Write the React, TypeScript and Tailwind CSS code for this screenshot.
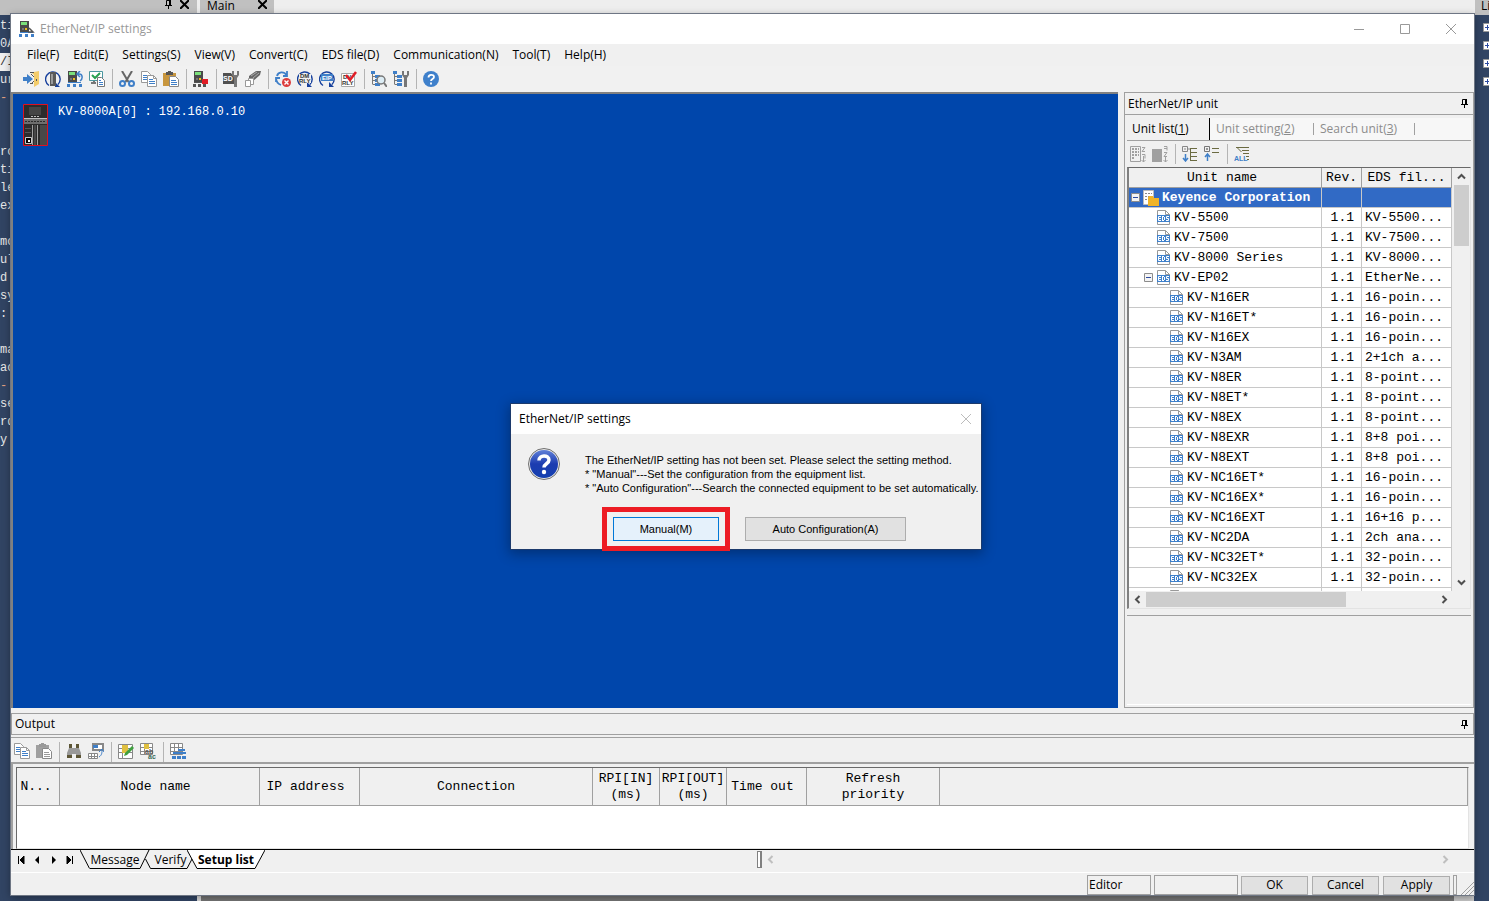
import type { ReactNode } from "react";

const menus = [
  "File(F)",
  "Edit(E)",
  "Settings(S)",
  "View(V)",
  "Convert(C)",
  "EDS file(D)",
  "Communication(N)",
  "Tool(T)",
  "Help(H)",
];

const units = [
  { name: "KV-5500", level: 1, eds: "KV-5500..." },
  { name: "KV-7500", level: 1, eds: "KV-7500..." },
  { name: "KV-8000 Series", level: 1, eds: "KV-8000..." },
  { name: "KV-EP02", level: 1, eds: "EtherNe...", open: true },
  { name: "KV-N16ER", level: 2, eds: "16-poin..." },
  { name: "KV-N16ET*", level: 2, eds: "16-poin..." },
  { name: "KV-N16EX", level: 2, eds: "16-poin..." },
  { name: "KV-N3AM", level: 2, eds: "2+1ch a..." },
  { name: "KV-N8ER", level: 2, eds: "8-point..." },
  { name: "KV-N8ET*", level: 2, eds: "8-point..." },
  { name: "KV-N8EX", level: 2, eds: "8-point..." },
  { name: "KV-N8EXR", level: 2, eds: "8+8 poi..." },
  { name: "KV-N8EXT", level: 2, eds: "8+8 poi..." },
  { name: "KV-NC16ET*", level: 2, eds: "16-poin..." },
  { name: "KV-NC16EX*", level: 2, eds: "16-poin..." },
  { name: "KV-NC16EXT", level: 2, eds: "16+16 p..." },
  { name: "KV-NC2DA", level: 2, eds: "2ch ana..." },
  { name: "KV-NC32ET*", level: 2, eds: "32-poin..." },
  { name: "KV-NC32EX", level: 2, eds: "32-poin..." },
  { name: "", level: 2, eds: "" },
];

const outputColumns = [
  { name: "N...", pad: "pr-1" },
  { name: "Node name", pad: "pr-2" },
  { name: "IP address", pad: "pr-2" },
  { name: "Connection", pad: "" },
  { name: "RPI[IN] (ms)", pad: "" },
  { name: "RPI[OUT] (ms)", pad: "" },
  { name: "Time out", pad: "pr-2" },
  { name: "Refresh priority", pad: "px-5" },
  { name: "", pad: "" },
];

const codeLines = [
  "ti", "0A", "/I", "ur", "-", "", "", "ro", "ti", "le", "ex", "",
  "mo", "ul", "d", "sy", ":", "", "ma", "ac", "-", "se", "rd", "y",
];

function Icon({ children, size = 16 }: { children: ReactNode; size?: number }) {
  return (
    <svg width={size} height={size} viewBox="0 0 16 16" fill="none" className="shrink-0" aria-hidden="true">
      {children}
    </svg>
  );
}

function Tool({ label, children }: { label: string; children: ReactNode }) {
  return (
    <button type="button" aria-label={label} className="flex h-[22px] w-[22px] shrink-0 items-center justify-center">
      <Icon>{children}</Icon>
    </button>
  );
}

function Separator() {
  return <span className="ml-1 mr-[3px] h-5 w-px shrink-0 bg-[#b4b4b4]" />;
}

function Plc() {
  return (
    <>
      <path d="M1 0h9v11H1z" fill="#4a4a4a" />
      <path d="M2 1h6v3H2z" fill="#7be07b" />
      <path d="M6 7h2v2H6z" fill="#f0c020" />
      <path d="M3 7h2v2H3z" fill="#777" />
    </>
  );
}

function Nodes() {
  return (
    <path d="M0 13h3v3H0zM6 13h3v3H6zM12 13h3v3h-3zM1 11h13v1H1z" fill="#3f7fc8" />
  );
}

function Pages() {
  return (
    <>
      <path d="M.5.5h6l3 3v8h-9z" fill="#fff" stroke="#999" />
      <path d="M2 4.5h4M2 6.5h4M2 8.5h4" stroke="#3f7fc8" />
      <path d="M6.5 4.5h6l3 3v8h-9z" fill="#fff" stroke="#999" />
      <path d="M12.5 4.5v3h3" stroke="#999" />
      <path d="M8 8.5h4M8 10.5h6M8 12.5h6" stroke="#3f7fc8" />
    </>
  );
}

function PasteShape({ grey }: { grey?: boolean }) {
  return (
    <>
      <path d="M0 2h13v13H0z" fill={grey ? "#a0a0a0" : "#c8963e"} />
      <path d="M3 1h2V0h3v1h2v3H3z" fill={grey ? "#999" : "#555"} />
      <path d="M6.5 5.5h6l3 3v7h-9z" fill="#fff" stroke="#888" />
      <path d="M8 9.5h5M8 11.5h6M8 13.5h6" stroke={grey ? "#999" : "#3f7fc8"} />
    </>
  );
}

function Wrench() {
  return (
    <path d="M9 0v4l2 3v9h3V7l2-3V0h-2v4h-3V0z" fill="#777" />
  );
}

function Cycle() {
  return (
    <>
      <path d="M4 14.5A7.300 7.300 0 1 1 13 13.500" stroke="#17409c" strokeWidth="1.400" />
      <path d="M10 11v5h5z" fill="#17409c" />
    </>
  );
}

function TreeLines() {
  return (
    <>
      <path d="M1.5 0v13.5M2 5.5h3M2 9.5h3M2 13.500h3" stroke="#777" />
      <path d="M0 0h4v3H0zM4 4h5v3H4zM4 8h5v3H4zM4 12h5v3H4z" fill="#3f7fc8" />
    </>
  );
}

function MainToolbar() {
  return (
    <div className="flex h-[26px] shrink-0 items-center bg-[#f1f1f1] pl-[9px]">
      <Tool label="Exit">
        <path d="M8 1h3l5-1v13l-5 3V4z" fill="#f3cc6b" />
        <path d="M7 1.500h4M7 12.500h3M13.500 8v2" stroke="#555" />
        <path d="M0 6h4V3l6 5-6 5v-3H0z" fill="#3f7fc8" />
        <path d="M8 3l3 3M8 13l3-3" stroke="#555" />
      </Tool>
      <Tool label="Switch unit">
        <Cycle />
        <path d="M5 1h6v14H5z" fill="#5a5a5a" />
        <path d="M6 3h2v10H6z" fill="#9c9c9c" />
      </Tool>
      <Tool label="Read setting">
        <Plc />
        <Nodes />
        <path d="M10 3h2c4 0 4 5 1 7M13 0l-3 3 3 3" stroke="#3f7fc8" strokeWidth="1.500" />
      </Tool>
      <Tool label="Verify">
        <path d="M.5.5h13v9H.5z" fill="#fff" stroke="#4b96a0" />
        <path d="M2 12h5M5 10v3" stroke="#777" strokeWidth="2" />
        <path d="M3 4l3 3 5-5" stroke="#27a050" strokeWidth="2" />
        <path d="M8.500 6.500h4l3 3v6h-7z" fill="#fff" stroke="#777" />
        <path d="M10 9.500h2M10 11.500h4M10 13.500h4" stroke="#3f7fc8" />
      </Tool>
      <Separator />
      <Tool label="Cut">
        <path d="M3 0l6.500 11M13 0L6.500 11" stroke="#666" strokeWidth="2" />
        <circle cx="3.500" cy="12.500" r="2.500" stroke="#3f7fc8" strokeWidth="2" />
        <circle cx="12.500" cy="12.500" r="2.500" stroke="#3f7fc8" strokeWidth="2" />
      </Tool>
      <Tool label="Copy"><Pages /></Tool>
      <Tool label="Paste"><PasteShape /></Tool>
      <Separator />
      <Tool label="Unit configuration">
        <Plc />
        <path d="M0 13h3v3H0zM5 13h3v3H5zM10 13h3v3h-3zM1 11h10v1H1z" fill="#555" />
        <path d="M9 8h6v5H9z" fill="#e11d26" />
      </Tool>
      <Separator />
      <Tool label="SD card settings">
        <path d="M0 2h8l3 4v7H0z" fill="#505050" />
        <text x="0" y="10" fontSize="7" fontWeight="700" fill="#fff" fontFamily="Liberation Sans, sans-serif">SD</text>
        <Wrench />
      </Tool>
      <Tool label="Clear">
        <path d="M4 5l7-5h5l-1 4-7 6H4z" fill="#666" />
        <path d="M6 5l6-4M8 7l6-5" stroke="#aaa" />
        <path d="M3.500 7.500h5v6h-5z" fill="#fff" stroke="#999" />
        <path d="M.500 9.500h5v6h-5z" fill="#fff" stroke="#999" />
      </Tool>
      <Separator />
      <Tool label="Stop communication">
        <path d="M12 0v5H8M11.500 4C9 0 3 .500 2 5M1 6c0 5 2 7 5 8M1 11V7h4" stroke="#3f7fc8" strokeWidth="1.800" />
        <circle cx="11.500" cy="11.500" r="4.500" fill="#dc3c3c" />
        <path d="M9.500 9.500l4 4m0-4l-4 4" stroke="#fff" strokeWidth="1.400" />
      </Tool>
      <Tool label="Refresh DM relay">
        <Cycle />
        <path d="M2 3h12v9H2z" fill="#f1f1f1" />
        <text x="3" y="7" fontSize="6" fontWeight="700" fill="#333" fontFamily="Liberation Sans, sans-serif">DM</text>
        <text x="2" y="12" fontSize="6" fontWeight="700" fill="#333" fontFamily="Liberation Sans, sans-serif">RLY</text>
      </Tool>
      <Tool label="Refresh EIP">
        <Cycle />
        <path d="M2 3h12v7H2z" fill="#3f7fc8" />
        <text x="3" y="9" fontSize="6" fontWeight="700" fill="#fff" fontFamily="Liberation Sans, sans-serif">EIP</text>
      </Tool>
      <Tool label="Check relay">
        <path d="M.5 2.500h13v13H.5z" fill="#fff" stroke="#aaa" />
        <text x="2" y="8" fontSize="6" fontWeight="700" fill="#333" fontFamily="Liberation Sans, sans-serif">DV</text>
        <text x="1" y="14" fontSize="6" fontWeight="700" fill="#333" fontFamily="Liberation Sans, sans-serif">RLY</text>
        <path d="M5 4l4 5 6-8" stroke="#e11d26" strokeWidth="2.500" />
      </Tool>
      <Separator />
      <Tool label="Search unit">
        <TreeLines />
        <circle cx="10" cy="9" r="4" fill="#dcecf4" stroke="#777" strokeWidth="1.500" />
        <path d="M13 12l3 4" stroke="#777" strokeWidth="2" />
      </Tool>
      <Tool label="Unit monitor"><TreeLines /><Wrench /></Tool>
      <Separator />
      <Tool label="Help">
        <circle cx="8" cy="8" r="8" fill="#3f80cb" />
        <path d="M5.500 6.500c0-3.500 5.500-3.500 5.500-.500C11 8 8 8 8 10M8 11.500v2" stroke="#fff" strokeWidth="1.800" />
      </Tool>
    </div>
  );
}

function Pin() {
  return (
    <svg width="7" height="9" viewBox="0 0 7 9" fill="none" className="shrink-0" aria-hidden="true">
      <path d="M1.5.5h3v5h-3zM0 5.500h7M3.500 6v3" stroke="#000" />
      <path d="M4 0h2v6H4z" fill="#000" />
    </svg>
  );
}

function EdsIcon() {
  return (
    <svg width="13" height="15" viewBox="0 0 13 15" fill="none" className="shrink-0" aria-hidden="true">
      <path d="M.5 14.500V.5h8l4 4v10z" fill="#fff" stroke="#999" />
      <path d="M8.500.5v4h4" stroke="#999" />
      <path d="M0 5h13v7H0z" fill="#3f80cb" />
      <path d="M4 6.500H1.500v4H4M1.500 8.500H4M5.500 6v5M5 6.500h2M5 10.500h2M7.500 7v3M12 6.500H9.500v2h2v2H9" stroke="#fff" />
    </svg>
  );
}

function Expander() {
  return (
    <svg width="9" height="9" viewBox="0 0 9 9" fill="none" className="shrink-0" aria-hidden="true">
      <path d="M.5.5h8v8h-8z" fill="#f4f4f4" stroke="#8c8c8c" />
      <path d="M2 4.500h5" stroke="#2d4ba0" />
    </svg>
  );
}

function Chevron({ d, color = "#505050" }: { d: string; color?: string }) {
  return (
    <svg width="9" height="9" viewBox="0 0 9 9" fill="none" className="shrink-0" aria-hidden="true">
      <path d={d} stroke={color} strokeWidth="2" />
    </svg>
  );
}

const up = "M1 6.500L4.500 3 8 6.500";
const down = "M1 2.500L4.500 6 8 2.500";
const left = "M6.500 1L3 4.500 6.500 8";
const right = "M2.500 1L6 4.500 2.500 8";

function UnitTable() {
  return (
    <table className="w-[323px] table-fixed border-separate border-spacing-0 bg-white font-['Liberation_Mono',monospace] text-[13px] leading-[17px]">
      <colgroup>
        <col className="w-[193px]" />
        <col className="w-10" />
        <col className="w-[90px]" />
      </colgroup>
      <thead>
        <tr className="h-5 bg-[#f0f0f0]">
          <th className="border-b border-r border-[#a0a0a0] p-0 pr-1.5 text-center font-normal">Unit name</th>
          <th className="border-b border-r border-[#a0a0a0] p-0 text-center font-normal">Rev.</th>
          <th className="border-b border-r border-[#a0a0a0] p-0 text-center font-normal">EDS fil...</th>
        </tr>
      </thead>
      <tbody>
        <tr className="h-5 bg-[#316ac5] font-bold text-white">
          <td className="border-b border-r border-[#c8c8c8] p-0">
            <div className="flex h-[19px] items-center gap-[3px] whitespace-nowrap pl-0.5">
              <Expander />
              <Icon>
                <path d="M.5.5h10v14H.5z" fill="#fff" stroke="#bbb" />
                <path d="M2 3.500h7M2 6.500h7M2 9.500h7" stroke="#888" strokeDasharray="2 1" />
                <path d="M5 7l1-1h4l1 2h5v8H5z" fill="#f0b428" />
              </Icon>
              <span>Keyence Corporation</span>
            </div>
          </td>
          <td className="border-b border-r border-[#c8c8c8] p-0" />
          <td className="border-b border-r border-[#c8c8c8] p-0" />
        </tr>
        {units.map((unit, i) => (
          <tr key={i} className="h-5">
            <td className="border-b border-r border-[#c8c8c8] p-0">
              <div className={unit.level === 1 ? "flex h-[19px] items-center gap-1 pl-[15px]" : "flex h-[19px] items-center gap-1 pl-7"}>
                <span className="flex w-[9px]">{unit.open && <Expander />}</span>
                <EdsIcon />
                <span>{unit.name}</span>
              </div>
            </td>
            <td className="border-b border-r border-[#c8c8c8] p-0 pr-[7px] text-right">{unit.name && "1.1"}</td>
            <td className="border-b border-r border-[#c8c8c8] p-0 pl-[3px]">{unit.eds}</td>
          </tr>
        ))}
      </tbody>
    </table>
  );
}

function UnitPanel() {
  return (
    <aside className="flex w-[350px] shrink-0 flex-col">
      <div className="flex h-[23px] shrink-0 items-center justify-between border border-[#a0a0a0] pl-[3px] pr-[5px]">
        <h2>EtherNet/IP unit</h2>
        <Pin />
      </div>
      <div className="flex min-h-0 flex-1 flex-col border-x border-b border-[#a0a0a0] px-0.5 pb-0.5 pt-[3px]">
        <div role="tablist" className="flex h-[23px] shrink-0 items-center border-b border-[#a0a0a0] bg-[#f7f7f7] text-[#8c8c8c]">
          <button type="button" role="tab" aria-selected="true" className="h-full w-[83px] border-r border-black bg-[#f0f0f0] pl-[5px] text-left text-black">
            Unit list(<u>1</u>)
          </button>
          <button type="button" role="tab" className="w-[104px] border-r border-[#a0a0a0] pl-1.5 text-left leading-3">
            Unit setting(<u>2</u>)
          </button>
          <button type="button" role="tab" className="w-[101px] border-r border-[#a0a0a0] pl-1.5 text-left leading-3">
            Search unit(<u>3</u>)
          </button>
        </div>
        <div className="flex h-[26px] shrink-0 items-center">
          <Tool label="Sort by vendor">
            <path d="M.5.5h10v15H.5z" stroke="#a0a0a0" />
            <path d="M2 3h7M2 6h7M2 9h7M2 12h3" stroke="#a0a0a0" strokeWidth="2" strokeDasharray="2 1" />
            <path d="M12 1.500h3l-3 4h3M12 8.500h3v4M13.500 10v6m-2-2l2 2 2-2" stroke="#a0a0a0" />
          </Tool>
          <Tool label="Sort by type">
            <path d="M0 3h10v13H0z" fill="#a0a0a0" />
            <path d="M12 .5h3v4M12 2.500h3M12 6.500h3l-3 4h3M13.500 11v5m-2-2l2 2 2-2" stroke="#a0a0a0" />
          </Tool>
          <Separator />
          <Tool label="Collapse all">
            <path d="M.5.5h5v5h-5zM2 3h2M6 3h3" stroke="#888" />
            <path d="M8 2.500h7M9 6.500h6M9 10.500h6M9 14.500h6M8.500 3v12" stroke="#6b6b42" />
            <path d="M3.500 8v7M1 12l2.500 3L6 12" stroke="#3f7fc8" strokeWidth="1.500" />
          </Tool>
          <Tool label="Expand all">
            <path d="M.5.5h5v5h-5zM2 3h2M3 2v2" stroke="#777" />
            <path d="M8 2.500h7M8 6.500h7" stroke="#6b6b42" />
            <path d="M3.500 15V8M1 11l2.500-3L6 11" stroke="#3f7fc8" strokeWidth="1.500" />
          </Tool>
          <Separator />
          <Tool label="Show all">
            <path d="M2 1.500h13M3.500 2l4 4M8 4.500h7M9 7.500h6M12 10.500h3M13 13.500h2" stroke="#6b6b42" />
            <text x="0" y="15" fontSize="7" fontWeight="700" fill="#3f7fc8" fontFamily="Liberation Sans, sans-serif">ALL</text>
          </Tool>
        </div>
        <div className="flex min-h-0 flex-1 flex-col border border-l-2 border-[#e3e3e3] border-l-[#808080] border-t-[#696969]">
          <div className="flex min-h-0 flex-1">
            <div className="min-h-0 flex-1 overflow-hidden">
              <UnitTable />
            </div>
            <div className="flex w-[18px] shrink-0 flex-col items-center bg-[#f0f0f0]">
              <span className="flex h-[17px] shrink-0 items-center"><Chevron d={up} /></span>
              <span className="h-[61px] w-[15px] bg-[#cdcdcd]" />
              <span className="mt-auto flex h-[17px] items-center"><Chevron d={down} /></span>
            </div>
          </div>
          <div className="flex h-[17px] shrink-0 items-center gap-1 bg-[#f0f0f0] pl-1">
            <Chevron d={left} />
            <span className="h-[15px] w-[200px] bg-[#cdcdcd]" />
            <span className="ml-auto flex w-[30px]"><Chevron d={right} /></span>
          </div>
        </div>
        <div className="mt-1.5 h-[90px] shrink-0 border-b border-t border-b-white border-t-[#a0a0a0]" />
      </div>
    </aside>
  );
}

function OutputPanel() {
  return (
    <section className="shrink-0">
      <div className="flex h-[22px] items-center justify-between border border-[#a0a0a0] pl-[3px] pr-[5px]">
        <h2>Output</h2>
        <Pin />
      </div>
      <div className="mt-0.5 flex h-[25px] items-end border-t border-[#a0a0a0]">
        <Tool label="Copy row"><Pages /></Tool>
        <Tool label="Paste row"><PasteShape grey /></Tool>
        <Separator />
        <Tool label="Find">
          <path d="M3 1h3v4h4V1h3v4l2 5v5h-5v-4H6v4H1v-5l2-5z" fill="#999" />
          <path d="M3 1h3v4H3zM10 1h3v4h-3zM1 12h5v3H1zM10 12h5v3h-5z" fill="#5c5535" />
        </Tool>
        <Tool label="Jump">
          <path d="M5 1h10v6H5z" fill="#fff" stroke="#888" strokeWidth="2" />
          <path d="M5 2h5v3H5z" fill="#3f7fc8" />
          <path d="M.5 10.500h9v5h-9zM0 13.500h9M3.500 10v5M6.500 10v5" fill="#fff" stroke="#888" />
          <path d="M11 14c3-2 3-4 3-8M11 9l3-3 2 3" stroke="#3f7fc8" />
        </Tool>
        <Separator />
        <Tool label="Edit">
          <path d="M.5 1.500h14v14H.5z" fill="#fff" />
          <path d="M.5 1.500h14v14H.5zM0 5.500h15M0 9.500h15M4.500 1v14" stroke="#888" />
          <path d="M4 2h6v8H4z" fill="#e0c040" />
          <path d="M6 13l1-3 7-7 2 2-7 7z" fill="#3fa03f" />
        </Tool>
        <Tool label="Replace">
          <path d="M.5.5h12v11H.5z" fill="#fff" />
          <path d="M.5.5h12v11H.5zM0 4.500h12M0 8.500h12M4.500 0v11" stroke="#888" />
          <path d="M4 1h5v5H4z" fill="#e0c040" />
          <text x="5" y="11" fontSize="7" fontWeight="700" fill="#555" fontFamily="Liberation Sans, sans-serif">ab</text>
          <text x="8" y="16" fontSize="7" fontWeight="700" fill="#3a6a5a" fontFamily="Liberation Sans, sans-serif">ac</text>
        </Tool>
        <Separator />
        <Tool label="Network list">
          <path d="M.5.5h12v11H.5z" fill="#fff" />
          <path d="M.5.5h12v11H.5zM0 4.500h12M0 8.500h12M4.500 0v11M8.500 0v11" stroke="#888" />
          <path d="M3 9h13v2H3zM2 13h4v3H2zM7 13h4v3H7zM12 13h4v3h-4zM8 6h7v2H8z" fill="#3f7fc8" />
        </Tool>
      </div>
      <div className="border-l-2 border-t-2 border-[#a0a0a0] pl-[3px] pr-[5px] pt-[3px]">
        <div className="h-[82px] border border-[#e3e3e3] border-l-[#696969] border-t-[#696969] bg-white">
          <table className="w-full table-fixed border-separate border-spacing-0 font-['Liberation_Mono',monospace] text-[13px] leading-4">
            <colgroup>
              <col className="w-[43px]" />
              <col className="w-[200px]" />
              <col className="w-[100px]" />
              <col className="w-[233px]" />
              <col className="w-[67px]" />
              <col className="w-[67px]" />
              <col className="w-20" />
              <col className="w-[133px]" />
              <col />
            </colgroup>
            <thead>
              <tr className="h-[38px] bg-[#f0f0f0]">
                {outputColumns.map(({ name, pad }) => (
                  <th key={name} className={`border-b border-r border-[#a0a0a0] py-0 text-center font-normal ${pad}`}>
                    {name}
                  </th>
                ))}
              </tr>
            </thead>
          </table>
        </div>
      </div>
      <div className="flex h-[24px] items-start border-b border-t border-b-white border-t-black">
        <div className="flex h-[19px] w-[69px] items-center justify-around px-0.5">
          {[
            ["First", "M1.500 0v8M7 0v8L3 4z"],
            ["Previous", "M6 0v8L2 4z"],
            ["Next", "M2 0v8l4-4z"],
            ["Last", "M1 0v8l4-4zM6.500 0v8"],
          ].map(([label, d]) => (
            <button key={label} type="button" aria-label={label}>
              <svg width="8" height="8" viewBox="0 0 8 8" aria-hidden="true">
                <path d={d} fill="#000" stroke={label === "First" || label === "Last" ? "#000" : "none"} strokeWidth="1" />
              </svg>
            </button>
          ))}
        </div>
        <div role="tablist" className="flex h-[19px] shrink-0 leading-[17px]">
          <svg width="10" height="19" viewBox="0 0 10 19" fill="none" aria-hidden="true">
            <path d="M0 0l9.500 18.500" stroke="#000" />
          </svg>
          <button type="button" role="tab" className="w-[50px] border-b border-black">Message</button>
          <svg width="14" height="19" viewBox="0 0 14 19" fill="none" aria-hidden="true">
            <path d="M0 18.500L9 0M5.500 9l5 9.500H14" stroke="#000" />
          </svg>
          <button type="button" role="tab" className="w-[33px] border-b border-black">Verify</button>
          <svg width="10" height="19" viewBox="0 0 10 19" fill="none" aria-hidden="true">
            <path d="M0 -1L10 18.500V-1z" fill="#fff" />
            <path d="M0 0l10 18.500M0 18.500L5 9" stroke="#000" />
          </svg>
          <button type="button" role="tab" aria-selected="true" className="w-[58px] whitespace-nowrap border-b border-black bg-white font-bold">
            Setup list
          </button>
          <svg width="10" height="19" viewBox="0 0 10 19" fill="none" aria-hidden="true">
            <path d="M0 19L10 0H0z" fill="#fff" />
            <path d="M0 18.500L10 0" stroke="#000" />
          </svg>
        </div>
        <div className="ml-auto flex h-[19px] w-[49%] items-center justify-between pr-6">
          <span className="flex items-center gap-1">
            <span className="h-[17px] w-[5px] border border-r-2 border-[#808080] bg-white" />
            <Chevron d={left} color="#bfbfbf" />
          </span>
          <Chevron d={right} color="#bfbfbf" />
        </div>
      </div>
      <footer className="flex h-[22px] items-end justify-end gap-[3px]">
        <output className="h-5 w-16 border border-[#a0a0a0] pl-px leading-[18px]">Editor</output>
        <output className="h-5 w-[84px] border border-[#a0a0a0]" />
        <div className="flex h-5 items-center gap-1">
          {["OK", "Cancel", "Apply"].map((label) => (
            <button key={label} type="button" className="h-[19px] w-[67px] border border-[#adadad] bg-[#e1e1e1] leading-4">
              {label}
            </button>
          ))}
        </div>
        <span className="h-5 w-1 border border-[#a0a0a0]" />
        <svg width="14" height="14" viewBox="0 0 14 14" fill="none" aria-hidden="true">
          <path d="M1 14L14 1M5 14l9-9M9 14l5-5" stroke="#a0a0a0" />
        </svg>
      </footer>
    </section>
  );
}

function UnitPicture() {
  return (
    <svg width="25" height="42" viewBox="0 0 25 42" fill="none" className="shrink-0" aria-hidden="true">
      <path d="M.5.5h24v41H.5z" fill="#2c2c2c" stroke="#e01020" />
      <path d="M6 3h12v8H6z" fill="#454545" />
      <path d="M8 12.500h9" stroke="#c0c0c0" strokeDasharray="2 1" />
      <path d="M1 14h23v6H1z" fill="#6e6e6e" />
      <path d="M2 17.500h21" stroke="#2c2c2c" strokeDasharray="2 1" />
      <path d="M1 14.500h23" stroke="#c0c0c0" />
      <path d="M9 21h1v20H9zM14 21h1v20h-1z" fill="#a0a0a0" />
      <path d="M11 21h2v20h-2zM17 21h7v20h-7z" fill="#484848" />
      <path d="M2 24.500h6M2 28.500h6" stroke="#555" />
      <path d="M2.500 33.500h6v6h-6z" fill="#000" stroke="#ccc" />
      <path d="M5 36h2v2H5z" fill="#fff" />
    </svg>
  );
}

function SetupDialog() {
  return (
    <div
      role="dialog"
      aria-labelledby="setup-title"
      className="absolute left-[511px] top-[404px] w-[470px] bg-[#f0f0f0] shadow-[0_0_0_1px_#1c3a6c,0_3px_12px_2px_rgba(0,0,0,0.3)]"
    >
      <div className="flex h-[30px] items-center justify-between bg-white pl-2 pr-2.5">
        <h2 id="setup-title">EtherNet/IP settings</h2>
        <button type="button" aria-label="Close dialog">
          <svg width="10" height="10" viewBox="0 0 10 10" aria-hidden="true">
            <path d="M0 0l10 10M10 0L0 10" stroke="#bcbcbc" />
          </svg>
        </button>
      </div>
      <div className="flex gap-6 pl-4 pt-3.5 font-['Liberation_Sans',sans-serif] text-[11px] leading-[14px]">
        <svg width="34" height="34" viewBox="0 0 34 34" className="shrink-0" aria-hidden="true">
          <defs>
            <linearGradient id="ball" x1="0" y1="0" x2="0" y2="1">
              <stop offset="0" stopColor="#6080d8" />
              <stop offset="0.500" stopColor="#1c3cb0" />
              <stop offset="1" stopColor="#1440b0" />
            </linearGradient>
          </defs>
          <circle cx="17" cy="16" r="15.500" fill="#e8e8e8" stroke="#707070" />
          <circle cx="17" cy="16" r="14" fill="url(#ball)" />
          <path d="M12 12.500c0-6 10-6 10-.500 0 4-5 3.500-5 7.500" fill="none" stroke="#fff" strokeWidth="3.500" />
          <circle cx="17" cy="24" r="2.200" fill="#fff" />
        </svg>
        <p className="whitespace-nowrap pt-[5px]">
          The EtherNet/IP setting has not been set. Please select the setting method.
          <br />* "Manual"---Set the configuration from the equipment list.
          <br />* "Auto Configuration"---Search the connected equipment to be set automatically.
        </p>
      </div>
      <div className="flex gap-[26px] pb-2 pl-[102px] pt-[22px] font-['Liberation_Sans',sans-serif] text-[11px]">
        <div className="relative">
          <button type="button" className="h-6 w-[106px] border border-[#0078d7] bg-[#e5f1fb]">Manual(M)</button>
          <span className="pointer-events-none absolute -inset-x-[11px] -inset-y-2.5 border-[5px] border-[#ed1c24]" />
        </div>
        <button type="button" className="h-6 w-[161px] border border-[#adadad] bg-[#e1e1e1]">Auto Configuration(A)</button>
      </div>
    </div>
  );
}

// Parent application that stays visible around the settings window
function ParentApp() {
  return (
    <div className="absolute inset-0 flex flex-col bg-[#314463]">
      <div className="flex h-[15px] shrink-0 items-start bg-[#eeeeee] leading-[11px]">
        <div className="flex h-full w-[197px] items-start justify-end gap-2 bg-[#c0c0c0] pr-2">
          <Pin />
          <CloseMark />
        </div>
        <div className="ml-[3px] flex h-full w-[74px] items-start justify-between bg-[#c0c0c0] pl-[7px] pr-[7px]">
          <span>Main</span>
          <CloseMark />
        </div>
        <div className="ml-auto h-full w-[14px] overflow-hidden bg-[#c0c0c0] pl-1.5">Li</div>
      </div>
      <div className="flex min-h-0 flex-1 justify-between overflow-hidden">
        <pre className="w-[11px] overflow-hidden pt-0.5 font-['Liberation_Mono',monospace] text-[12px] leading-[18px] text-[#e8e8e8]">
          {codeLines.map((line, i) => (
            <div key={i} className={line === "/I" ? "h-[18px] bg-[#f0f0f0] text-[#333]" : line === "-" ? "h-[18px] text-[#e0a080]" : "h-[18px]"}>
              {line}
            </div>
          ))}
        </pre>
        <div className="flex w-[6px] flex-col gap-[9px] overflow-hidden pt-2">
          {[0, 1, 2, 3].map((i) => (
            <svg key={i} width="9" height="9" viewBox="0 0 9 9" className="shrink-0" aria-hidden="true">
              <path d="M.5.5h8v8h-8z" fill="#fff" stroke="#999" />
              <path d="M2 4.500h5M4.500 2v5" stroke="#2d4ba0" />
            </svg>
          ))}
        </div>
      </div>
      <div className="flex h-[6px] shrink-0">
        <span className="w-[197px]" />
        <span className="w-1 bg-[#d8d8d8]" />
        <span className="flex-1 bg-[#757575]" />
        <span className="w-5 bg-[#c8c8c8]" />
        <span className="w-[15px]" />
      </div>
    </div>
  );
}

function CloseMark() {
  return (
    <svg width="9" height="9" viewBox="0 0 9 9" className="shrink-0" aria-hidden="true">
      <path d="M0 0l9 9M9 0L0 9" stroke="#000" strokeWidth="2" />
    </svg>
  );
}

export default function App() {
  return (
    <div className="relative h-screen overflow-hidden pb-1.5 pl-[11px] pr-[15px] pt-3.5 font-['Open_Sans',sans-serif] text-[12px] leading-4 text-black">
      <ParentApp />
      <div className="relative flex h-full flex-col bg-[#f0f0f0] shadow-[0_0_0_1px_#6e7684,0_2px_8px_rgba(0,0,0,0.4)]">
        <header className="flex h-[30px] shrink-0 items-center bg-white pl-2 text-[#999]">
          <Icon>
            <Plc />
            <Nodes />
            <path d="M10 7l4 4H9" stroke="#555" strokeWidth="1.500" />
          </Icon>
          <h1 className="pl-[5px]">EtherNet/IP settings</h1>
          <div className="ml-auto flex items-center gap-9 pr-[18px]">
            <button type="button" aria-label="Minimize">
              <svg width="10" height="10" viewBox="0 0 10 10" aria-hidden="true"><path d="M0 5.500h10" stroke="#999" /></svg>
            </button>
            <button type="button" aria-label="Maximize">
              <svg width="10" height="10" viewBox="0 0 10 10" aria-hidden="true"><path d="M.5.5h9v9h-9z" fill="none" stroke="#999" /></svg>
            </button>
            <button type="button" aria-label="Close">
              <svg width="10" height="10" viewBox="0 0 10 10" aria-hidden="true"><path d="M0 0l10 10M10 0L0 10" stroke="#999" /></svg>
            </button>
          </div>
        </header>
        <nav className="flex h-[22px] shrink-0 items-center gap-3.5 pl-4">
          {menus.map((menu) => (
            <button key={menu} type="button">{menu}</button>
          ))}
        </nav>
        <MainToolbar />
        <div className="flex min-h-0 flex-1 gap-1.5">
          <main className="flex min-w-0 flex-1 items-start gap-2.5 border-l-2 border-t-2 border-[#808080] bg-[#0046ab] pl-2.5 pt-2.5 font-['Liberation_Mono',monospace] text-white">
            <UnitPicture />
            <span>KV-8000A[0] : 192.168.0.10</span>
          </main>
          <UnitPanel />
        </div>
        <div className="h-[5px] shrink-0" />
        <OutputPanel />
      </div>
      <SetupDialog />
    </div>
  );
}
